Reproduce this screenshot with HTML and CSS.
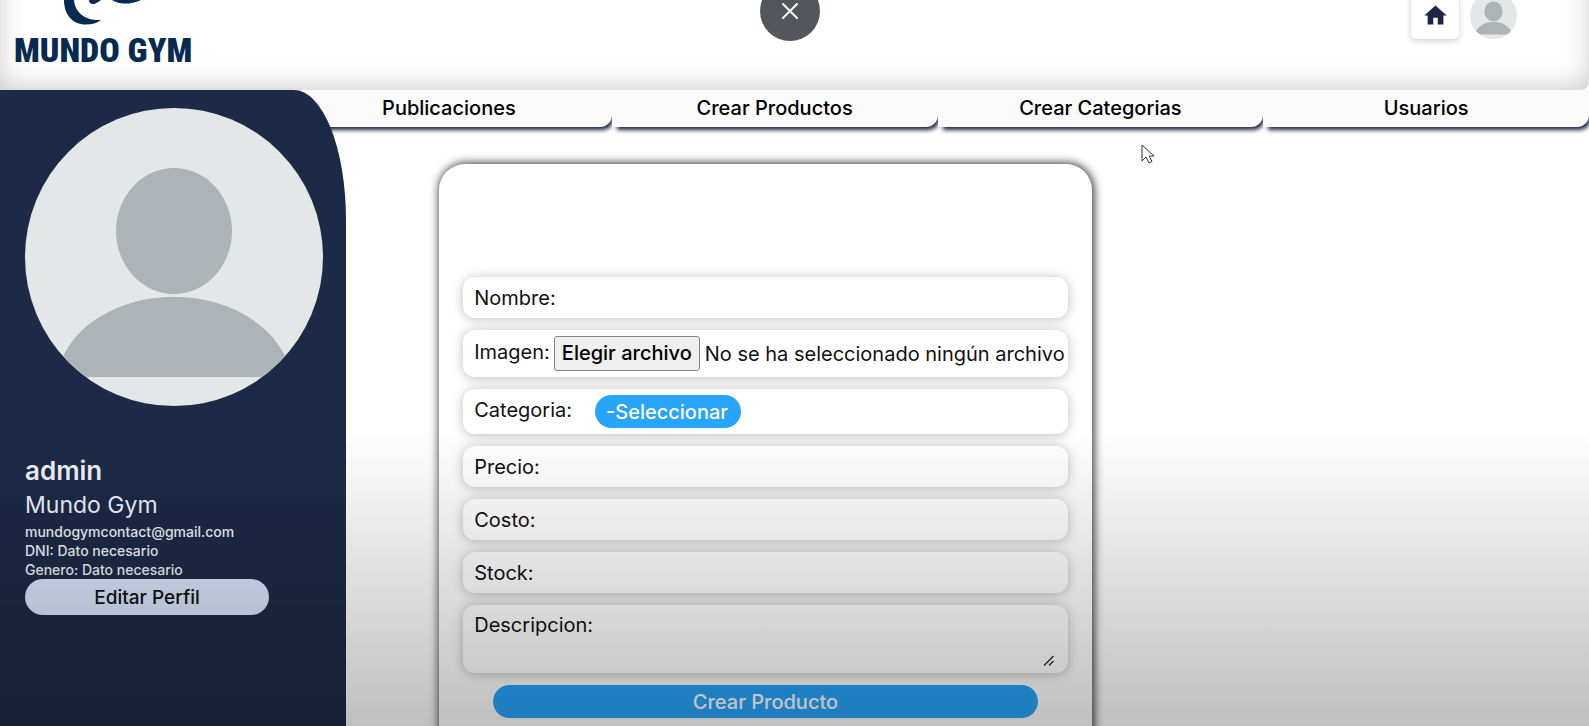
FILE: index.html
```html
<!DOCTYPE html>
<html lang="es">
<head>
<meta charset="utf-8">
<title>Mundo Gym</title>
<link rel="stylesheet" href="styles.css">
</head>
<body>
<div class="page">
  <header class="header">
    <a class="logo" href="#">
      <svg class="logo-mark" width="90" height="28" viewBox="0 0 90 28" aria-hidden="true">
        <path d="M2 0C2 14 10 24.500 24 24.500C30 24.500 35 23 39 20C27 21 13 15 12 0Z M27 0H39C36 2 33 4.500 30 4C28 3.500 27 2 27 0Z M50 0H79C72 3 66 4 61 3.500C56 3 53 2 50 0Z"/>
      </svg>
      <span class="logo-text">MUNDO GYM</span>
    </a>
    <div class="header-actions">
      <a class="home" href="#" aria-label="Inicio">
        <svg width="27" height="27" viewBox="0 0 24 24"><path d="M10 20v-6h4v6h5v-8h3L12 3 2 12h3v8z"/></svg>
      </a>
      <a class="user" href="#" aria-label="Perfil">
        <svg width="47" height="47" viewBox="0 0 298 298">
          <defs><clipPath id="round-small"><circle cx="149" cy="149" r="149"/></clipPath></defs>
          <g clip-path="url(#round-small)"><rect class="face-bg" width="298" height="298"/><ellipse class="face" cx="149" cy="123" rx="58" ry="63"/><path class="face" d="M31.700 269A118 90 0 0 1 266.300 269z"/></g>
        </svg>
      </a>
    </div>
  </header>

  <div class="body">
    <aside class="sidebar">
      <svg class="avatar" viewBox="0 0 298 298" role="img" aria-label="Foto de perfil">
        <defs><clipPath id="round"><circle cx="149" cy="149" r="149"/></clipPath></defs>
        <g clip-path="url(#round)"><rect class="face-bg" width="298" height="298"/><ellipse class="face" cx="149" cy="123" rx="58" ry="63"/><path class="face" d="M31.700 269A118 90 0 0 1 266.300 269z"/></g>
      </svg>
      <h1 class="username">admin</h1>
      <p class="fullname">Mundo Gym</p>
      <p class="detail">mundogymcontact@gmail.com</p>
      <p class="detail">DNI: Dato necesario</p>
      <p class="detail">Genero: Dato necesario</p>
      <button class="edit" type="button">Editar Perfil</button>
    </aside>

    <main class="main">
      <nav class="tabs">
        <a class="tab" href="#">Publicaciones</a>
        <a class="tab" href="#">Crear Productos</a>
        <a class="tab" href="#">Crear Categorias</a>
        <a class="tab" href="#">Usuarios</a>
      </nav>
      <form class="card">
        <div class="field"><label for="nombre">Nombre:</label><input class="entry" id="nombre" type="text"></div>
        <div class="field field-file">
          <label class="raised" for="imagen">Imagen:</label>
          <input class="file-input" id="imagen" type="file">
          <label class="file-button" for="imagen">Elegir archivo</label>
          <span class="file-name">No se ha seleccionado ningún archivo</span>
        </div>
        <div class="field field-select">
          <label class="raised" for="categoria">Categoria:</label>
          <select class="select" id="categoria"><option>-Seleccionar</option></select>
        </div>
        <div class="field"><label for="precio">Precio:</label><input class="entry" id="precio" type="text"></div>
        <div class="field"><label for="costo">Costo:</label><input class="entry" id="costo" type="text"></div>
        <div class="field"><label for="stock">Stock:</label><input class="entry" id="stock" type="text"></div>
        <div class="field field-area">
          <label for="descripcion">Descripcion:</label><textarea class="entry" id="descripcion"></textarea>
          <svg class="grip" width="12" height="12" viewBox="0 0 12 12" aria-hidden="true"><path d="M1 10.500 10.500 1M6 10.500 10.500 6"/></svg>
        </div>
        <button class="submit" type="submit">Crear Producto</button>
      </form>
    </main>
  </div>

  <div class="shade"></div>
  <button class="close" type="button" aria-label="Cerrar">
    <svg width="18" height="18" viewBox="0 0 18 18"><path d="M2 2 16 16M16 2 2 16"/></svg>
  </button>
  <svg class="cursor" width="14" height="21" viewBox="0 0 14 21" aria-hidden="true"><path d="M1 1v16l4-4 3 6 3-1.500-3-5.500h5z"/></svg>
</div>
</body>
</html>
```
FILE: styles.css
```css
* { box-sizing: border-box; }

body {
  margin: 0;
  font-family: Inter, "Open Sans", sans-serif;
  font-size: 20px;
  color: #111;
  background: #fff;
}

h1, p { margin: 0; }
a { color: inherit; text-decoration: none; }
button, input, select, textarea { font: inherit; }

.page {
  position: relative;
  display: flex;
  flex-direction: column;
  height: 100vh;
  overflow: hidden;
}

/* Header, scrolled partly out of view */
.header {
  display: flex;
  flex: none;
  justify-content: space-between;
  align-items: flex-start;
  height: 150px;
  margin-top: -60px;
  padding: 60px 72px 0 14px;
  border-bottom-right-radius: 8px;
  background: #fff;
  box-shadow: inset 0 -4px 26px rgba(0, 0, 0, .2);
}

.logo { display: flex; flex-direction: column; color: #062a52; }
.logo-mark { margin-left: 48px; fill: currentColor; }
.logo-text {
  font-family: "Roboto Condensed", "Liberation Sans Narrow", "Liberation Sans", sans-serif;
  font-size: 34px;
  font-weight: 900;
  line-height: 44px;
}

.header-actions { display: flex; align-items: flex-end; gap: 11px; margin-top: -9px; }
.home {
  display: flex;
  justify-content: center;
  align-items: center;
  width: 48px;
  height: 48px;
  border-radius: 5px;
  background: #fff;
  box-shadow: 0 2px 6px rgba(0, 0, 0, .2);
}
.home svg { fill: #1b2749; }
.user, .user svg { display: block; }
.face-bg { fill: #e4e7e8; }
.face { fill: #adb3b6; }

.body { display: flex; flex: 1; min-height: 0; }

/* Profile */
.sidebar {
  z-index: 1;
  display: flex;
  flex: none;
  flex-direction: column;
  align-items: flex-start;
  width: 346px;
  padding: 18px 23px 0 25px;
  border-top-right-radius: 52px 130px;
  background: #1d2a47;
  color: #eef1f8;
}
.avatar { width: 100%; margin-bottom: 48px; }
.username { font-size: 26px; font-weight: 600; line-height: 34px; }
.fullname { font-size: 23px; line-height: 34px; }
.detail { font-size: 14px; font-weight: 500; line-height: 19px; }
.edit {
  width: 244px;
  height: 36px;
  padding: 0;
  border: 0;
  border-radius: 18px;
  background: #d8e5fb;
  color: #111;
  font-size: 19px;
  font-weight: 500;
}

/* Section tabs */
.main { flex: 1; min-width: 0; }
.tabs { display: flex; margin-left: -60px; }
.tab {
  flex: 1;
  padding-bottom: 1px;
  border-bottom-right-radius: 12px;
  background: #fafafa;
  box-shadow: 3px 5px 4px -2px #1d2545;
  color: #000;
  font-weight: 500;
  line-height: 36px;
  text-align: center;
}

/* Product form */
.card {
  display: flex;
  flex-direction: column;
  gap: 12px;
  width: 52.5%;
  margin: 37px 0 0 7.5%;
  padding: 113px 24px 40px;
  border-radius: 26px;
  background: #fff;
  box-shadow: 1px 0 10px 1px rgba(0, 0, 0, .8);
}
.field {
  display: flex;
  align-items: center;
  height: 41px;
  padding-left: 11px;
  border-radius: 12px;
  background: #fff;
  box-shadow: 0 1px 12px rgba(0, 0, 0, .26);
  white-space: nowrap;
}
.field-file { height: 47px; }
.field-select { height: 45px; }
.raised { padding: 0 4px 4px 0; }
.entry {
  flex: 1;
  min-width: 0;
  padding: 0 8px;
  border: 0;
  outline: 0;
  background: transparent;
}
.file-input { position: absolute; width: 1px; height: 1px; opacity: 0; }
.file-button {
  margin-right: 5px;
  padding: 0 7px;
  border: 1px solid #858585;
  border-radius: 3px;
  background: #efefef;
  color: #000;
  font-weight: 500;
  line-height: 33px;
}
.select {
  width: 146px;
  height: 33px;
  margin-left: 19px;
  padding: 0 11px;
  border: 0;
  border-radius: 17px;
  appearance: none;
  background: #27a5fb;
  color: #fff;
  font-weight: 500;
}
.field-area { position: relative; align-items: flex-start; height: 68px; padding-top: 8px; }
.field-area .entry { align-self: stretch; resize: none; }
.grip { position: absolute; right: 13px; bottom: 6px; fill: none; stroke: #333; stroke-width: 1.5; }
.submit {
  height: 33px;
  margin: 0 30px;
  padding: 0;
  border: 0;
  border-radius: 17px;
  background: #27a5fb;
  color: #fff;
  font-weight: 500;
}

/* Overlay controls */
.shade {
  position: absolute;
  z-index: 2;
  inset: auto 0 0;
  height: 296px;
  background: linear-gradient(transparent, rgba(0, 0, 0, .25));
  pointer-events: none;
}
.close {
  position: absolute;
  z-index: 3;
  top: -19px;
  left: 50%;
  display: flex;
  justify-content: center;
  align-items: center;
  width: 60px;
  height: 60px;
  margin-left: -35px;
  padding: 0;
  border: 0;
  border-radius: 50%;
  background: #53565b;
}
.close svg { fill: none; stroke: #fff; stroke-width: 2; stroke-linecap: round; }
.cursor { position: absolute; z-index: 3; top: 144px; left: 1141px; fill: #fff; stroke: #333; stroke-width: 1; }
```
